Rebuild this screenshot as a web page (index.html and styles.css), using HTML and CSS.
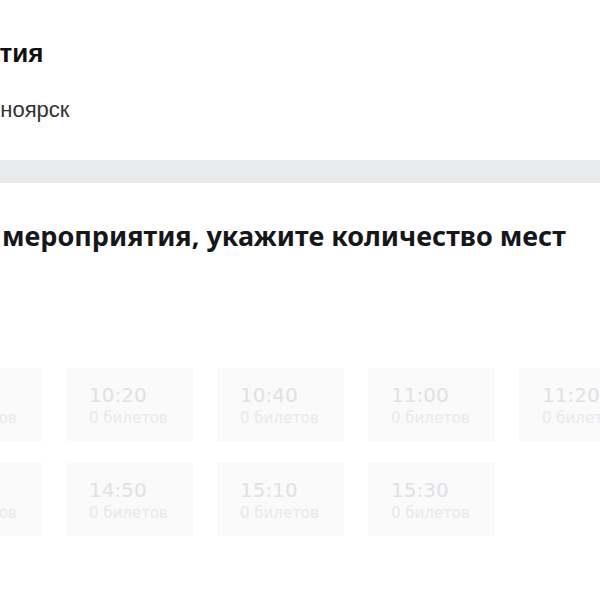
FILE: index.html
```html
<!DOCTYPE html>
<html lang="ru">
<head>
<meta charset="utf-8">
<title>Мероприятия</title>
<link rel="stylesheet" href="styles.css">
</head>
<body>
<div class="page">
  <header class="head">
    <h1 class="title">Мероприятия</h1>
    <p class="city">Красноярск</p>
  </header>
  <div class="bar"></div>
  <section class="booking">
    <h2 class="heading">Выберите время мероприятия, укажите количество мест</h2>
    <div class="slots">
      <div class="slot"><div class="time">10:00</div><div class="count">0 билетов</div></div>
      <div class="slot"><div class="time">10:20</div><div class="count">0 билетов</div></div>
      <div class="slot"><div class="time">10:40</div><div class="count">0 билетов</div></div>
      <div class="slot"><div class="time">11:00</div><div class="count">0 билетов</div></div>
      <div class="slot"><div class="time">11:20</div><div class="count">0 билетов</div></div>
      <div class="slot"><div class="time">14:30</div><div class="count">0 билетов</div></div>
      <div class="slot"><div class="time">14:50</div><div class="count">0 билетов</div></div>
      <div class="slot"><div class="time">15:10</div><div class="count">0 билетов</div></div>
      <div class="slot"><div class="time">15:30</div><div class="count">0 билетов</div></div>
    </div>
  </section>
</div>
</body>
</html>
```
FILE: styles.css
```css
html, body {
  margin: 0;
  padding: 0;
  background: #ffffff;
  overflow: hidden;
  width: 600px;
  height: 600px;
}
.page {
  width: 900px;
  margin-left: -85px;
  font-family: "Liberation Sans", Arial, sans-serif;
}
.head {
  padding-top: 37px;
}
.title {
  margin: 0 0 0 -46px;
  font-size: 26px;
  font-weight: 700;
  line-height: 32px;
  color: #111111;
  white-space: nowrap;
}
.city {
  margin: 29px 0 0 37px;
  font-size: 22px;
  line-height: 24px;
  color: #333333;
  white-space: nowrap;
}
.bar {
  margin-top: 38px;
  height: 23px;
  background: #e9eaeb;
}
.booking {
  padding-top: 34px;
}
.heading {
  margin: 0 0 0 -153px;
  font-family: "Noto Sans", "Open Sans", sans-serif;
  font-size: 27px;
  font-weight: 700;
  line-height: 38px;
  color: #16171b;
  white-space: nowrap;
}
.slots {
  margin-top: 113px;
  display: grid;
  grid-template-columns: repeat(5, 127px);
  column-gap: 24px;
  row-gap: 22px;
}
.slot {
  height: 73px;
  box-sizing: border-box;
  padding: 14px 0 0 23px;
  background: #fafafa;
  font-family: "DejaVu Sans", sans-serif;
}
.time {
  font-size: 20px;
  line-height: 26px;
  color: #e0e1e5;
}
.count {
  font-size: 15px;
  line-height: 20px;
  color: #e8e9ec;
}
```
